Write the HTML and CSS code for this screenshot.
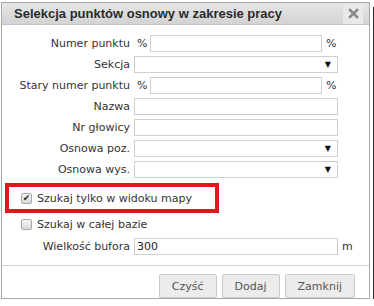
FILE: index.html
```
<!DOCTYPE html>
<html lang="pl">
<head>
    <meta charset="UTF-8" />
    <title>Selekcja punktów osnowy</title>
    <link rel="stylesheet" href="styles.css">
</head>
<body>
    <div class="dialog">
        <div class="titlebar">
            <span class="title">Selekcja punktów osnowy w zakresie pracy</span>
            <button class="close" title="Zamknij">
                <svg width="11" height="11" viewBox="0 0 11 11"><path d="M2 2 L9 9 M9 2 L2 9" stroke="#8a8a8a" stroke-width="2.6" stroke-linecap="square"/></svg>
            </button>
        </div>

        <div class="content">
            <div class="row">
                <label>Numer punktu</label>
                <div class="field"><span class="pre">%</span><input type="text" class="txt"><span class="suf">%</span></div>
            </div>
            <div class="row">
                <label>Sekcja</label>
                <div class="field"><div class="select"><span class="arrow">▼</span></div></div>
            </div>
            <div class="row">
                <label>Stary numer punktu</label>
                <div class="field"><span class="pre">%</span><input type="text" class="txt"><span class="suf">%</span></div>
            </div>
            <div class="row">
                <label>Nazwa</label>
                <div class="field"><input type="text" class="txt"></div>
            </div>
            <div class="row">
                <label>Nr głowicy</label>
                <div class="field"><input type="text" class="txt"></div>
            </div>
            <div class="row">
                <label>Osnowa poz.</label>
                <div class="field"><div class="select"><span class="arrow">▼</span></div></div>
            </div>
            <div class="row">
                <label>Osnowa wys.</label>
                <div class="field"><div class="select"><span class="arrow">▼</span></div></div>
            </div>

            <div class="check-row marked">
                <span class="cb checked">✔</span>Szukaj tylko w widoku mapy
            </div>
            <div class="check-row plain">
                <span class="cb"></span>Szukaj w całej bazie
            </div>

            <div class="row buffer">
                <label>Wielkość bufora</label>
                <div class="field"><input type="text" class="txt" value="300"><span class="unit">m</span></div>
            </div>
        </div>

        <div class="footer">
            <button class="btn">Czyść</button>
            <button class="btn">Dodaj</button>
            <button class="btn">Zamknij</button>
        </div>
    </div>
</body>
</html>
```

FILE: styles.css
```
body {
    margin: 0;
    background-color: #fff;
    font-family: "DejaVu Sans", Verdana, sans-serif;
    font-size: 11px;
    color: #333;
}

.dialog {
    margin: 2px 0 0 1px;
    width: 369px;
    height: 297px;
    box-sizing: border-box;
    border: 1px solid #a8a8a8;
    background-color: #fff;
    display: flex;
    flex-direction: column;
    box-shadow: 3px 3px 0 0 #fff, 5px 5px 0 0 #2a2a2a;
}

.titlebar {
    height: 24px;
    background: linear-gradient(#e6e6e6, #d3d3d3);
    border-bottom: 1px solid #c4c4c4;
    display: flex;
    align-items: center;
    justify-content: space-between;
    padding: 0 6px 0 12px;
}

.title {
    font-family: "Liberation Sans", Arial, sans-serif;
    font-weight: bold;
    font-size: 13px;
    color: #2b2b2b;
}

.close {
    width: 20px;
    height: 20px;
    border: none;
    padding: 0;
    background-color: #e9e9e9;
    display: flex;
    align-items: center;
    justify-content: center;
}

.content {
    padding: 10px 31px 10px 0;
    display: flex;
    flex-direction: column;
    gap: 4px;
}

.row {
    display: flex;
    align-items: center;
    height: 17px;
    gap: 4px;
}

.row label {
    width: 128px;
    text-align: right;
    flex-shrink: 0;
}

.field {
    flex: 1;
    display: flex;
    align-items: center;
    height: 17px;
}

.pre {
    margin: 0 3px 0 3px;
}

.suf {
    margin: 0 2px 0 4px;
    width: 10px;
}

.txt {
    flex: 1;
    min-width: 0;
    height: 17px;
    box-sizing: border-box;
    border: 1px solid #cfcfcf;
    padding: 0 2px;
    font-family: inherit;
    font-size: 11px;
    color: #222;
    outline: none;
}

.select {
    flex: 1;
    height: 17px;
    box-sizing: border-box;
    border: 1px solid #cfcfcf;
    display: flex;
    align-items: center;
    justify-content: flex-end;
    padding-right: 6px;
}

.arrow {
    font-size: 8px;
    color: #111;
}

.check-row {
    display: flex;
    align-items: center;
    height: 12px;
}

.marked {
    margin: 1px 0 0 3px;
    width: 214px;
    height: 30px;
    box-sizing: border-box;
    border: 4px solid #e3161e;
    padding-left: 12px;
}

.plain {
    margin-top: 1px;
    padding-left: 19px;
}

.cb {
    width: 11px;
    height: 11px;
    box-sizing: border-box;
    border: 1px solid #a9a9a9;
    border-radius: 2px;
    background: linear-gradient(#f4f4f4, #d8d8d8);
    margin-right: 5px;
    font-size: 9px;
    line-height: 9px;
    text-align: center;
    color: #222;
}

.buffer {
    margin-top: 4px;
}

.buffer .field {
    margin-right: -18px;
}

.unit {
    margin-left: 4px;
    width: 14px;
}

.footer {
    border-top: 1px solid #cfcfcf;
    padding: 8px 14px 0 0;
    display: flex;
    justify-content: flex-end;
    gap: 5px;
}

.btn {
    height: 24px;
    padding: 0 12px;
    border: 1px solid #c9c9c9;
    background-color: #ececec;
    font-family: inherit;
    font-size: 11px;
    color: #555;
    border-radius: 2px;
}
```
